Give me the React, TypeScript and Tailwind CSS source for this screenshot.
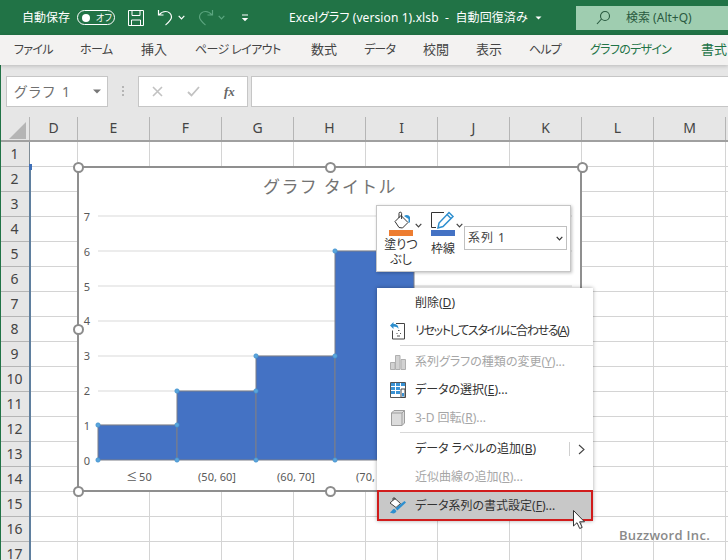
const rows = Array.from({ length: 17 }, (_, i) => i + 1);
const columns = ["D", "E", "F", "G", "H", "I", "J", "K", "L", "M", ""];
const tabs = [
  { label: "ファイル", className: "w-[66px] tracking-[-0.7px]" },
  { label: "ホーム", className: "w-[61px] tracking-[-0.6px]" },
  { label: "挿入", className: "w-[54px] text-[13px]" },
  { label: "ページ レイアウト", className: "w-[116px] tracking-[-0.6px]" },
  { label: "数式", className: "w-[53px] text-[13px]" },
  { label: "データ", className: "w-[59px] tracking-[-0.8px]" },
  { label: "校閲", className: "w-[53px] text-[13px]" },
  { label: "表示", className: "w-[53px] text-[13px]" },
  { label: "ヘルプ", className: "w-[61px] tracking-[-0.8px]" },
  { label: "グラフのデザイン", className: "w-[111px] tracking-[-0.7px] text-[#217346]" },
  { label: "書式", className: "w-[40px] text-[13px] text-[#217346]" },
];
const bars = [
  { x: 98, y: 425 },
  { x: 177, y: 391 },
  { x: 256, y: 356 },
  { x: 335, y: 251 },
];
const xLabels = [
  { x: 139, text: "≤\u200950" },
  { x: 217, text: "(50, 60]" },
  { x: 296, text: "(60, 70]" },
  { x: 375, text: "(70, 80]" },
];
const dots = [
  [98, 460], [177, 460], [256, 460], [335, 460], [98, 425], [177, 425],
  [177, 391], [256, 391], [256, 356], [335, 356], [335, 251],
];

function Grid() {
  return (
    <div>
      <div className="grid h-[25px] grid-cols-[30px_48px_repeat(10,72px)] border-b-2 border-[#a0a0a0] bg-[#e6e6e6]">
        <div className="relative border-r border-[#b5b5b5]">
          <svg className="absolute left-[9px] top-[5px]" width="17" height="17">
            <path d="M17 0V17H0Z" fill="#b5b5b5" />
          </svg>
        </div>
        {columns.map((c) => (
          <div key={c} className="flex items-center justify-center border-r border-[#b5b5b5] pb-px text-[14px] leading-none text-[#444]">
            {c}
          </div>
        ))}
      </div>
      {rows.map((r) => (
        <div key={r} className="grid h-[25px] grid-cols-[30px_48px_repeat(10,72px)] bg-white">
          <div className="flex items-center justify-center border-b border-r border-[#b5b5b5] border-r-[#7f8c96] bg-[#e6e6e6] text-[14px] leading-none text-[#444]">
            {r}
          </div>
          {columns.map((c) => (
            <div key={c} className="border-b border-r border-[#d4d4d4]" />
          ))}
        </div>
      ))}
    </div>
  );
}

function ChartFrame() {
  return (
    <div className="absolute left-[77px] top-[166px] h-[326px] w-[505px] border-2 border-[#8f8f8f] bg-white">
      <svg className="block" width="501" height="322" viewBox="79 168 501 322" fontFamily="'Noto Sans','Noto Sans CJK JP',sans-serif">
        {[216, 251, 286, 321, 356, 391, 425].map((y) => (
          <line key={y} x1="98" x2="572" y1={y} y2={y} stroke="#d9d9d9" />
        ))}
        {[7, 6, 5, 4, 3, 2, 1, 0].map((n) => (
          <text key={n} x="87" y={460 - n * 34.9 + 5} fontSize="11" fill="#595959" textAnchor="middle">
            {n}
          </text>
        ))}
        {bars.map((b) => (
          <rect key={b.x} x={b.x} y={b.y} width="79" height={460 - b.y} fill="#4472c4" stroke="#7c7f87" />
        ))}
        {xLabels.map((l) => (
          <text key={l.x} x={l.x} y="481" fontSize="11" fill="#595959" textAnchor="middle">
            {l.text}
          </text>
        ))}
        {dots.map(([x, y]) => (
          <circle key={`${x}-${y}`} cx={x} cy={y} r="2.2" fill="#5aa5dc" stroke="#3f8fcb" strokeWidth="0.6" />
        ))}
        <text x="330" y="193" fontSize="17" letterSpacing="1.3" fill="#737373" textAnchor="middle" style={{ fontFeatureSettings: "normal" }}>
          グラフ タイトル
        </text>
      </svg>
    </div>
  );
}

function Handle({ className }: { className: string }) {
  return <div className={`absolute h-[11px] w-[11px] rounded-full border-2 border-[#8c8c8c] bg-white ${className}`} />;
}

function Chevron({ color = "#444" }: { color?: string }) {
  return (
    <svg width="7" height="5" viewBox="0 0 7 5">
      <path d="M.7.8 3.500 3.800 6.300.8" fill="none" stroke={color} strokeWidth="1.2" />
    </svg>
  );
}

function MiniToolbar() {
  return (
    <div className="absolute left-[376px] top-[205px] flex h-[67px] w-[195px] border border-[#c6c6c6] bg-white shadow-[1px_1px_3px_rgba(0,0,0,0.25)]">
      <div className="ml-[11px] flex w-[26px] flex-col items-center pt-[5px]">
        <svg width="24" height="19" viewBox="0 0 24 19">
          <path d="M6 10.500 12 4.500 19 11.500 13.500 17 10 16.500Z" fill="#fff" stroke="#333" strokeWidth="1" />
          <path d="M10 7V2.500a1.300 1.300 0 0 1 2.600 0V8" fill="none" stroke="#333" strokeWidth="1" />
          <path d="M15 5c2.500-2 5-1 6 1v5.500h-1.500V8Z" fill="#2e8fcf" />
        </svg>
        <div className="h-[6px] w-[24px] bg-[#ed7d31]" />
        <div className="mt-px whitespace-nowrap text-center text-[12px] leading-[15px] text-[#333]">
          塗りつ
          <br />
          ぶし
        </div>
      </div>
      <div className="ml-[1px] mt-[17px] h-fit">
        <Chevron />
      </div>
      <div className="ml-[9px] flex w-[24px] flex-col items-center pt-[5px]">
        <svg width="24" height="19" viewBox="0 0 24 19">
          <path d="M13 1.500H.5V16.500H5" fill="none" stroke="#333" strokeWidth="1" />
          <path d="M7 17 8 12 18 1.500 22 5.500 12 15.500Z" fill="#fff" stroke="#2e8fcf" strokeWidth="1.5" />
          <path d="M16 3.500 20 7.500" stroke="#2e8fcf" strokeWidth="1.5" />
        </svg>
        <div className="h-[6px] w-[24px] bg-[#4472c4]" />
        <div className="mt-[6px] whitespace-nowrap text-[12px] leading-[14px] text-[#333]">枠線</div>
      </div>
      <div className="ml-[1px] mt-[17px] h-fit">
        <Chevron />
      </div>
      <div className="ml-[1px] mt-[20px] flex h-[24px] w-[103px] items-center justify-between border border-[#c0c0c0] pl-[3px] pr-[3px] text-[12px] tracking-[1px] text-[#444]">
        <span>系列 1</span>
        <Chevron color="#333" />
      </div>
    </div>
  );
}

function MenuItem({ label, icon, disabled, arrow }: { label: React.ReactNode; icon?: React.ReactNode; disabled?: boolean; arrow?: boolean }) {
  return (
    <div className={`flex h-[28px] items-center ${disabled ? "text-[#a6a6a6]" : "text-[#333]"}`}>
      <div className="flex w-[38px] justify-center pl-[3px]">{icon}</div>
      <div className="flex-1 whitespace-nowrap text-[12px]">{label}</div>
      {arrow && (
        <div className="mr-[8px] flex h-[14px] items-center border-l border-[#d0d0d0] pl-[8px]">
          <svg width="7" height="11" viewBox="0 0 7 11">
            <path d="M1 1 6 5.500 1 10" fill="none" stroke="#444" strokeWidth="1.1" />
          </svg>
        </div>
      )}
    </div>
  );
}

function ContextMenu() {
  return (
    <div className="absolute left-[377px] top-[288px] h-[233px] w-[216px] bg-white pt-px shadow-[0_0_4px_rgba(0,0,0,0.35)]">
      <MenuItem label={<>削除(<u>D</u>)</>} />
      <MenuItem
        label={<span className="tracking-[-1.3px]">リセットしてスタイルに合わせる(<u>A</u>)</span>}
        icon={
          <svg width="15" height="18" viewBox="0 0 15 18">
            <path d="M6 1.500H14.500V17H2.500V8.500" fill="none" stroke="#444" />
            <path d="M8 8.500h1.500M6.500 11.500h1M10 11.500h1M7 14h3" stroke="#555" />
            <path d="M0 3.500 3.500 0V2c3.500 0 5 1.800 5 5-1-1.800-3-2.500-5-2.500V7Z" fill="#2e8fcf" />
          </svg>
        }
      />
      <div className="ml-[23px] h-px bg-[#d8d8d8]" />
      <div className="h-[2px]" />
      <MenuItem
        disabled
        label={<>系列グラフの種類の変更(<u>Y</u>)...</>}
        icon={
          <svg width="16" height="16" viewBox="0 0 16 16">
            <path d="M.5 8.500h4.500V15.500H.5ZM5.500 1.500h4.500V15.500H5.500ZM11 5.500h4.500V15.500H11Z" fill="#d2d2d2" stroke="#b0b0b0" />
          </svg>
        }
      />
      <MenuItem
        label={<>データの選択(<u>E</u>)...</>}
        icon={
          <svg width="16" height="16" viewBox="0 0 16 16">
            <path d="M.5.500h15V15.500H.5Z" fill="#fff" stroke="#555" />
            <path d="M1 1h4v3H1ZM6 1h4v3H6ZM11 1h4v3h-4ZM1 5h4v3H1ZM6 5h4v3H6ZM1 9h4v3H1ZM6 9h4v3H6Z" fill="#3a92d4" />
            <path d="M11 7h4v8.500h-4Z" fill="#fff" stroke="#444" />
            <path d="M12 11h2v3.500h-2Z" fill="#3a92d4" />
          </svg>
        }
      />
      <MenuItem
        disabled
        label={<>3-D 回転(<u>R</u>)...</>}
        icon={
          <svg width="14" height="16" viewBox="0 0 14 16">
            <path d="M3 .5H13.500V13L11 15.500H.5V3Z" fill="#dcdcdc" stroke="#9d9d9d" />
            <path d="M.5 3H11V15.500M11 3 13.500.5" fill="none" stroke="#9d9d9d" />
          </svg>
        }
      />
      <div className="ml-[23px] h-px bg-[#d8d8d8]" />
      <div className="h-[2px]" />
      <MenuItem label={<>データ ラベルの追加(<u>B</u>)</>} arrow />
      <MenuItem disabled label={<>近似曲線の追加(<u>R</u>)...</>} />
      <div className="absolute left-0 top-[202px] flex h-[31px] w-[216px] items-center border-2 border-[#d11c1c] bg-[#c8c8c8] text-[#333]">
        <div className="flex w-[36px] justify-center pl-px">
          <svg width="18" height="17" viewBox="0 0 18 17">
            <path d="M1 6 6 1.500 11.500 6.500 7 10.500Z" fill="#fff" stroke="#444" />
            <path d="M4 3.500V1h2V3" fill="none" stroke="#444" />
            <path d="M4.500 16.500c-1.500 0-3-.7-3.500-1.200 2-.5 2-3 4.200-3.500L7.500 14c-.5 1.500-1.800 2.500-3 2.500Z" fill="#2e8fcf" />
            <path d="M6.500 11.300 15.500 4l1.500 1.500L8.300 13.500Z" fill="#2e8fcf" />
          </svg>
        </div>
        <div className="whitespace-nowrap text-[12px]">データ系列の書式設定(<u>F</u>)...</div>
      </div>
    </div>
  );
}

export default function App() {
  return (
    <div className="relative h-[560px] w-[728px] overflow-hidden bg-white font-['Noto_Sans','Noto_Sans_CJK_JP',sans-serif] [font-feature-settings:'palt']">
      {/* title bar */}
      <div className="flex h-[35px] items-center bg-[#217346] text-[12px] text-white">
        <span className="ml-[22px]">自動保存</span>
        <div className="ml-[7px] flex h-[15px] w-[38px] items-center rounded-full border border-white pl-[4px] text-[9px]">
          <span className="h-[8px] w-[8px] rounded-full bg-white" />
          <span className="ml-[6px] leading-none">オフ</span>
        </div>
        <svg className="ml-[13px]" width="16" height="16" viewBox="0 0 16 16" fill="none" stroke="#fff">
          <path d="M.5.5h15v15H.5ZM4 .5v5h8v-5M3.500 15.500V10h9v5.500" />
        </svg>
        <svg className="ml-[13px]" width="17" height="17" viewBox="0 0 17 17" fill="none" stroke="#fff" strokeWidth="1.2">
          <path d="M1.500 1v5h5M2 6c2-2.500 4-3.500 6.500-3.500C12 2.500 14.500 5 14.500 8c0 3-2.500 5-6 8" />
        </svg>
        <div className="ml-[4px]"><Chevron color="#fff" /></div>
        <svg className="ml-[12px]" width="17" height="17" viewBox="0 0 17 17" fill="none" stroke="#5ba57f" strokeWidth="1.2">
          <path d="M15.500 1v5h-5M15 6c-2-2.500-4-3.500-6.500-3.500C5 2.500 2.500 5 2.500 8c0 3 2.500 5 6 8" />
        </svg>
        <div className="ml-[4px]"><Chevron color="#5ba57f" /></div>
        <svg className="ml-[16px]" width="8" height="8" viewBox="0 0 8 8">
          <path d="M1 .5H7V1.500H1ZM0.800 4H7.200L4 7.200Z" fill="#fff" />
        </svg>
        <span className="ml-[40px] whitespace-pre tracking-[0.1px]">Excelグラフ (version 1).xlsb  -  自動回復済み</span>
        <svg className="ml-[7px]" width="7" height="4" viewBox="0 0 7 4">
          <path d="M.5.500H6.500L3.500 3.500Z" fill="#fff" />
        </svg>
        <div className="ml-auto flex h-[24px] w-[152px] items-center bg-[#9fcdb0] pl-[20px] text-[#2a5a40]">
          <svg width="15" height="15" viewBox="0 0 15 15" fill="none" stroke="#2a5a40" strokeWidth="1.1">
            <circle cx="9" cy="6" r="4.5" />
            <path d="M5.500 9 1 14" />
          </svg>
          <span className="ml-[15px]">検索 (Alt+Q)</span>
        </div>
      </div>
      {/* ribbon tabs */}
      <div className="relative z-10 flex h-[30px] items-center overflow-hidden bg-[#f3f2f1] pl-[14px] text-[12px] text-[#444] shadow-[0_1px_4px_rgba(0,0,0,0.2)]">
        {tabs.map((t) => (
          <span key={t.label} className={`shrink-0 whitespace-nowrap ${t.className}`}>
            {t.label}
          </span>
        ))}
      </div>
      {/* formula bar */}
      <div className="flex h-[52px] items-start bg-[#e6e6e6] pt-[11px]">
        <div className="ml-[6px] flex h-[31px] w-[102px] items-center justify-between border border-[#c6c6c6] bg-white pl-[7px] pr-[6px] text-[14px] tracking-[2px] text-[#707070]">
          <span>グラフ 1</span>
          <svg width="8" height="5" viewBox="0 0 8 5">
            <path d="M0 .5H8L4 4.500Z" fill="#777" />
          </svg>
        </div>
        <div className="ml-[14px] mt-[10px] flex flex-col gap-[2px]">
          <span className="h-[2px] w-[2px] bg-[#b5b5b5]" />
          <span className="h-[2px] w-[2px] bg-[#b5b5b5]" />
          <span className="h-[2px] w-[2px] bg-[#b5b5b5]" />
        </div>
        <div className="ml-[14px] flex h-[31px] w-[110px] items-center border border-[#c6c6c6] bg-white">
          <svg className="ml-[13px]" width="11" height="11" viewBox="0 0 11 11">
            <path d="M1 1 10 10M10 1 1 10" stroke="#c2c2c2" strokeWidth="1.6" />
          </svg>
          <svg className="ml-[24px]" width="13" height="11" viewBox="0 0 13 11">
            <path d="M1 6 4.500 9.500 12 1" fill="none" stroke="#c2c2c2" strokeWidth="1.8" />
          </svg>
          <span className="ml-[24px] font-['Liberation_Serif',serif] text-[13px] font-bold italic text-[#666]">fx</span>
        </div>
        <div className="ml-[3px] h-[31px] flex-1 border border-r-0 border-[#c6c6c6] bg-white" />
      </div>
      <Grid />
      {/* dark edge lines of the window and the selected row range */}
      <div className="absolute bottom-0 left-0 top-[35px] w-px bg-[#217346]" />
      <div className="absolute bottom-0 left-[29px] top-[166px] w-[2px] bg-[#5f7f9e]" />
      <div className="absolute left-[29px] top-[164px] h-[6px] w-[3px] bg-[#3e6fb8]" />

      <ChartFrame />
      <Handle className="left-[73px] top-[162px]" />
      <Handle className="left-[325px] top-[162px]" />
      <Handle className="left-[577px] top-[162px]" />
      <Handle className="left-[73px] top-[324px]" />
      <Handle className="left-[73px] top-[486px]" />
      <Handle className="left-[325px] top-[486px]" />
      <MiniToolbar />
      <ContextMenu />
      <svg className="absolute left-[573px] top-[510px]" width="13" height="20" viewBox="0 0 13 20">
        <path d="M.5.5V16L4 12.700 6.700 18.500 9.200 17.400 6.600 11.800H11.500Z" fill="#fff" stroke="#333" />
      </svg>
      <div className="absolute left-[619px] top-[526px] font-['Open_Sans',sans-serif] text-[13px] font-semibold tracking-[0.3px] text-[#8a8a8a]">
        Buzzword Inc.
      </div>
    </div>
  );
}
